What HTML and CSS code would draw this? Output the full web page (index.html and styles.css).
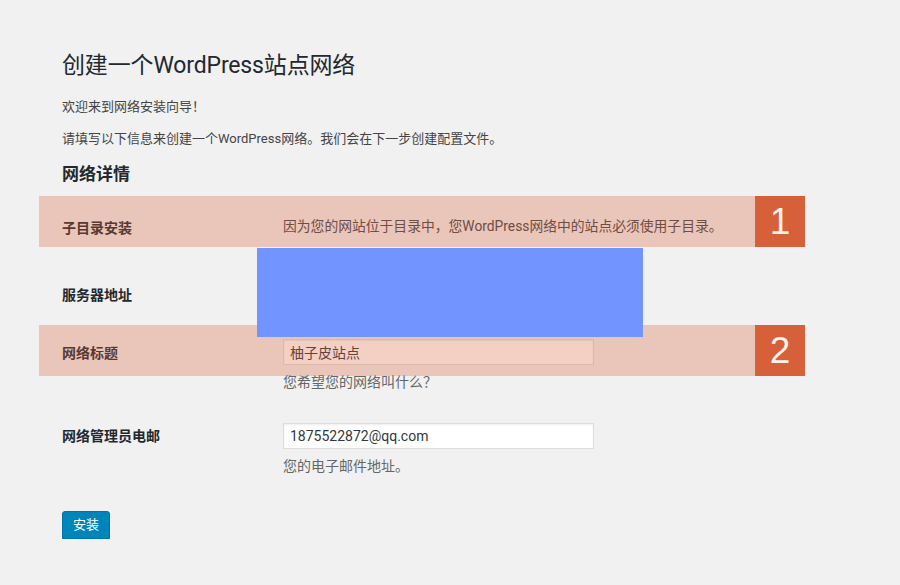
FILE: index.html
```html
<!DOCTYPE html>
<html lang="zh-CN">
<head>
<meta charset="utf-8">
<title>创建一个WordPress站点网络</title>
<link rel="stylesheet" href="styles.css">
</head>
<body>
<div class="wrap">
  <div class="head">
    <h1 class="title">创建一个WordPress站点网络</h1>
    <p class="intro">欢迎来到网络安装向导！</p>
    <p class="intro last">请填写以下信息来创建一个WordPress网络。我们会在下一步创建配置文件。</p>
    <h2 class="section">网络详情</h2>
  </div>
  <div class="form">
    <div class="row row-sub band">
      <div class="th">子目录安装</div>
      <div class="td"><span class="note">因为您的网站位于目录中，您WordPress网络中的站点必须使用子目录。</span></div>
      <div class="badge"><span class="badge-num">1</span></div>
    </div>
    <div class="row row-server">
      <div class="th">服务器地址</div>
      <div class="td"></div>
    </div>
    <div class="row row-title band">
      <div class="th">网络标题</div>
      <div class="td">
        <input class="field" type="text" value="柚子皮站点">
        <p class="desc">您希望您的网络叫什么？</p>
      </div>
      <div class="badge"><span class="badge-num">2</span></div>
    </div>
    <div class="row row-email">
      <div class="th">网络管理员电邮</div>
      <div class="td">
        <input class="field" type="text" value="1875522872@qq.com">
        <p class="desc">您的电子邮件地址。</p>
      </div>
    </div>
    <div class="redact"></div>
  </div>
  <div class="actions">
    <button class="button-primary" type="button">安装</button>
  </div>
</div>
</body>
</html>
```

FILE: styles.css
```css
html, body {
  margin: 0;
  padding: 0;
  background: #f1f1f1;
}
body {
  font-family: Roboto, "Noto Sans CJK SC", sans-serif;
  color: #444;
  font-size: 13px;
}
.wrap {
  margin-left: 39px;
  width: 766px;
  padding-top: 51px;
}
.head {
  padding-left: 23px;
}
.title {
  margin: 0 0 16px;
  font-size: 23px;
  font-weight: 400;
  line-height: 30px;
  letter-spacing: -0.15px;
  color: #23282d;
}
.intro {
  margin: 0 0 12px;
  font-size: 13px;
  line-height: 20px;
}
.intro.last {
  margin-bottom: 14px;
}
.section {
  margin: 0 0 11px;
  font-size: 17px;
  font-weight: 700;
  line-height: 22px;
  color: #23282d;
}
.form {
  position: relative;
}
.row {
  position: relative;
  display: flex;
}
.th {
  width: 221px;
  padding-left: 23px;
  flex: none;
  font-size: 14px;
  font-weight: 700;
  line-height: 18px;
  color: #23282d;
}
.td {
  flex: 1;
}
.row-sub {
  height: 51px;
}
.row-sub .th {
  padding-top: 23px;
}
.row-sub .td {
  padding-top: 21px;
}
.note {
  font-size: 13.8px;
  line-height: 18px;
  color: #444;
}
.row-server {
  height: 78px;
}
.row-server .th {
  padding-top: 39px;
}
.row-title .th {
  padding-top: 19px;
}
.row-title .td {
  padding-top: 14px;
  padding-bottom: 16px;
}
.row-email .th {
  padding-top: 19px;
}
.row-email .td {
  padding-top: 15px;
}
.field {
  display: block;
  box-sizing: border-box;
  width: 311px;
  height: 26px;
  margin: 0;
  padding: 2px 6px;
  border: 1px solid #ddd;
  box-shadow: inset 0 1px 2px rgba(0, 0, 0, 0.07);
  background: #fff;
  font-family: Roboto, "Noto Sans CJK SC", sans-serif;
  font-size: 14px;
  color: #32373c;
  outline: none;
}
.desc {
  margin: 8px 0 0;
  font-size: 14px;
  line-height: 19px;
  color: #666;
}
.band::after {
  content: "";
  position: absolute;
  left: 0;
  top: 0;
  width: 716px;
  height: 51px;
  background: rgba(214, 97, 58, 0.3);
  pointer-events: none;
}
.badge {
  position: absolute;
  right: 0;
  top: 0;
  width: 50px;
  height: 51px;
  background: #d5603a;
  display: flex;
  align-items: center;
  justify-content: center;
}
.badge-num {
  font-family: "Liberation Sans", sans-serif;
  font-size: 37px;
  line-height: 1;
  color: #fdf1ec;
}
.redact {
  position: absolute;
  left: 218px;
  top: 52px;
  width: 386px;
  height: 89px;
  background: #7294fe;
}
.actions {
  padding-left: 23px;
  margin-top: 35px;
}
.button-primary {
  box-sizing: border-box;
  height: 28px;
  margin: 0;
  padding: 0 10px;
  border: 1px solid #0073aa;
  border-radius: 3px;
  background: #0085ba;
  box-shadow: 0 1px 0 #006799;
  font-family: Roboto, "Noto Sans CJK SC", sans-serif;
  font-size: 13px;
  line-height: 26px;
  color: #fff;
}
```
